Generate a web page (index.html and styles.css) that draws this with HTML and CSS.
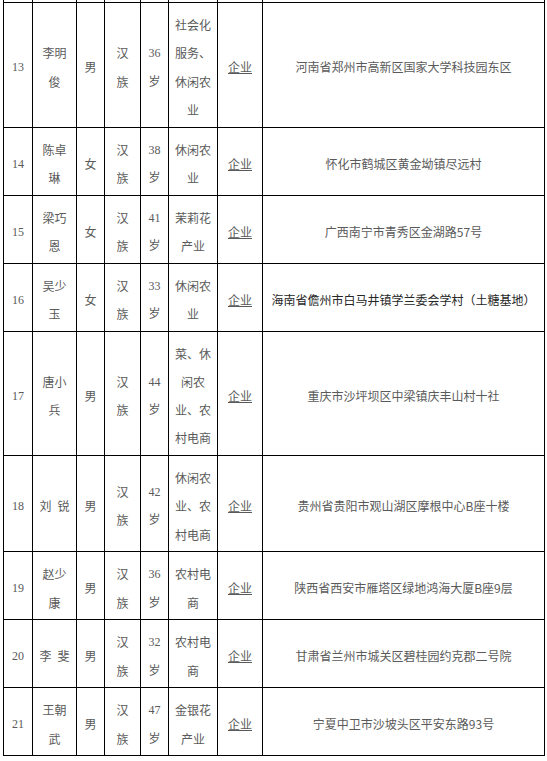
FILE: index.html
```html
<!DOCTYPE html>
<html lang="zh">
<head>
<meta charset="utf-8">
<title>名单</title>
<link rel="stylesheet" href="styles.css">
</head>
<body>
<div class="wrap">
<table class="roster">
  <colgroup>
    <col class="c-no"><col class="c-name"><col class="c-sex"><col class="c-eth"><col class="c-age"><col class="c-ind"><col class="c-type"><col class="c-addr">
  </colgroup>
  <tbody>
    <tr class="cut"><td></td><td></td><td></td><td></td><td></td><td></td><td></td><td></td></tr>
    <tr>
      <td class="num">13</td><td>李明<br>俊</td><td>男</td><td>汉<br>族</td><td class="num">36<br>岁</td>
      <td>社会化<br>服务、<br>休闲农<br>业</td><td class="type">企业</td><td class="addr">河南省郑州市高新区国家大学科技园东区</td>
    </tr>
    <tr>
      <td class="num">14</td><td>陈卓<br>琳</td><td>女</td><td>汉<br>族</td><td class="num">38<br>岁</td>
      <td>休闲农<br>业</td><td class="type">企业</td><td class="addr">怀化市鹤城区黄金坳镇尽远村</td>
    </tr>
    <tr>
      <td class="num">15</td><td>梁巧<br>恩</td><td>女</td><td>汉<br>族</td><td class="num">41<br>岁</td>
      <td>茉莉花<br>产业</td><td class="type">企业</td><td class="addr">广西南宁市青秀区金湖路57号</td>
    </tr>
    <tr>
      <td class="num">16</td><td>吴少<br>玉</td><td>女</td><td>汉<br>族</td><td class="num">33<br>岁</td>
      <td>休闲农<br>业</td><td class="type">企业</td><td class="addr dark">海南省儋州市白马井镇学兰委会学村（土糖基地）</td>
    </tr>
    <tr>
      <td class="num">17</td><td>唐小<br>兵</td><td>男</td><td>汉<br>族</td><td class="num">44<br>岁</td>
      <td>菜、休<br>闲农<br>业、农<br>村电商</td><td class="type">企业</td><td class="addr">重庆市沙坪坝区中梁镇庆丰山村十社</td>
    </tr>
    <tr>
      <td class="num">18</td><td>刘&ensp;锐</td><td>男</td><td>汉<br>族</td><td class="num">42<br>岁</td>
      <td>休闲农<br>业、农<br>村电商</td><td class="type">企业</td><td class="addr">贵州省贵阳市观山湖区摩根中心B座十楼</td>
    </tr>
    <tr>
      <td class="num">19</td><td>赵少<br>康</td><td>男</td><td>汉<br>族</td><td class="num">36<br>岁</td>
      <td>农村电<br>商</td><td class="type">企业</td><td class="addr">陕西省西安市雁塔区绿地鸿海大厦B座9层</td>
    </tr>
    <tr>
      <td class="num">20</td><td>李&ensp;斐</td><td>男</td><td>汉<br>族</td><td class="num">32<br>岁</td>
      <td>农村电<br>商</td><td class="type">企业</td><td class="addr">甘肃省兰州市城关区碧桂园约克郡二号院</td>
    </tr>
    <tr>
      <td class="num">21</td><td>王朝<br>武</td><td>男</td><td>汉<br>族</td><td class="num">47<br>岁</td>
      <td>金银花<br>产业</td><td class="type">企业</td><td class="addr">宁夏中卫市沙坡头区平安东路93号</td>
    </tr>
  </tbody>
</table>
</div>
</body>
</html>
```
FILE: styles.css
```css
html, body {
  margin: 0;
  padding: 0;
  background: #ffffff;
}

.wrap {
  padding: 0 0 0 3px;
  overflow: hidden;
  height: 761px;
}

.roster {
  border-collapse: collapse;
  table-layout: fixed;
  width: 541px;
  margin-top: -11px;
  font-family: "Liberation Serif", "Noto Sans CJK SC", serif;
  font-size: 12px;
  color: #5a5a5a;
}

.c-no { width: 29px; }
.c-name { width: 44px; }
.c-sex { width: 28px; }
.c-eth { width: 36px; }
.c-age { width: 28px; }
.c-ind { width: 49px; }
.c-type { width: 45px; }
.c-addr { width: 282px; }

.roster td {
  border: 1px solid #000;
  padding: 8px 0 2.5px;
  line-height: 28.25px;
  text-align: center;
  vertical-align: middle;
  white-space: nowrap;
  font-family: "Noto Sans CJK SC", sans-serif;
}

.roster td.num {
  font-family: "Liberation Serif", "Noto Sans CJK SC", serif;
}

.roster tr.cut td {
  height: 12px;
  padding: 0;
  line-height: 1px;
}

.roster td.type {
  text-decoration: underline;
}

.roster td.addr {
  font-family: "Noto Sans CJK SC", sans-serif;
}

.roster td.dark {
  color: #262626;
}
```
